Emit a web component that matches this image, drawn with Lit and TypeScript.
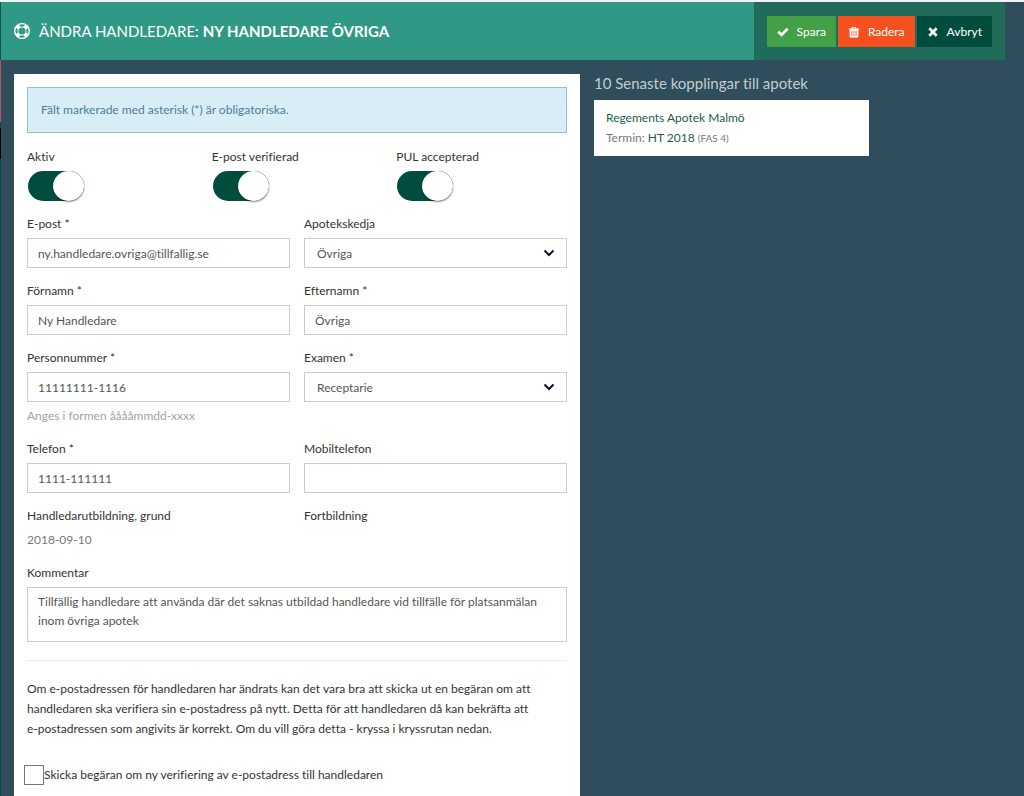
import { LitElement, html, css, svg } from "lit";
import { customElement, property } from "lit/decorators.js";

const icons = {
  ring: svg`<path fill-rule="evenodd" d="M8 0a8 8 0 1 0 0 16A8 8 0 0 0 8 0zM8 1.3a6.6 6.6 0 0 1 3.1.8L9.5 3.8a4.6 4.6 0 0 0-3 0L4.9 2.1A6.6 6.6 0 0 1 8 1.3zM2.1 4.9l1.7 1.6a4.6 4.6 0 0 0 0 3l-1.7 1.6a6.6 6.6 0 0 1 0-6.2zM8 14.7a6.6 6.6 0 0 1-3.1-.8l1.6-1.7a4.6 4.6 0 0 0 3 0l1.6 1.7a6.6 6.6 0 0 1-3.1.8zM8 11.6a3.6 3.6 0 1 1 0-7.2 3.6 3.6 0 0 1 0 7.2zM13.9 11.1l-1.7-1.6a4.6 4.6 0 0 0 0-3l1.7-1.6a6.6 6.6 0 0 1 0 6.2z"/>`,
  check: svg`<path d="M6 14.4.4 8.800 3 6.200 6 9.200 13 2.200 15.600 4.800z"/>`,
  trash: svg`<path fill-rule="evenodd" d="M5.5 1.2h5l.9 2H15v1.6h-1.2V14q0 1.4-1.4 1.4H3.6Q2.2 15.400 2.200 14V4.800H1V3.200h3.600zM6.300 3.200h3.400l-.4-.8H6.700zM4.700 6.200v7h1.100v-7zm2.800 0v7h1v-7zm2.700 0v7h1.100v-7z"/>`,
  cross: svg`<path d="M4.400 1.800 8 5.400l3.600-3.600 2.600 2.600L10.600 8l3.600 3.600-2.600 2.600L8 10.600l-3.600 3.600-2.600-2.600L5.400 8 1.800 4.400z"/>`,
};

@customElement("action-button")
class ActionButton extends LitElement {
  @property() kind = "save";
  @property() icon: keyof typeof icons = "check";

  static styles = css`
    :host { display: block; }
    .button {
      display: flex;
      align-items: center;
      gap: 8px;
      height: 31px;
      padding: 1px 10px 0;
      border: 0;
      color: #fff;
      font: 12px/20px Lato, sans-serif;
      cursor: pointer;
    }
    .save { background: #43a047; }
    .delete { background: #f4511e; }
    .cancel { background: #004d40; }
    .icon { width: 12px; height: 12px; fill: currentColor; }
  `;

  render() {
    return html`<button class="button ${this.kind}" type="button">
      <svg class="icon" viewBox="0 0 16 16" aria-hidden="true">${icons[this.icon]}</svg>
      <slot></slot>
    </button>`;
  }
}

@customElement("app-root")
class AppRoot extends LitElement {
  static styles = css`
    :host {
      display: block;
      min-height: 100vh;
      box-sizing: border-box;
      overflow: hidden;
      border-top: 2px solid #f1f3f4;
      background: #2f4d5b;
      color: #333;
      font: 12px/20px Lato, sans-serif;
      font-variant-ligatures: none;
    }
    * { box-sizing: border-box; }
    .shell {
      display: flex;
      min-height: 100vh;
    }
    .edge {
      flex: none;
      display: flex;
      flex-direction: column;
      width: 1px;
      background: #0d4a4c;
    }
    .edge-menu { height: 58px; background: #00594d; }
    .edge-alert { height: 62px; background: #a85a60; }
    .edge-gap { height: 6px; }
    .edge-item { height: 31px; background: #000; }
    .main { flex: 1; min-width: 0; }
    .header {
      display: flex;
      min-height: 58px;
      margin-right: 19px;
      background: #2f9985;
    }
    .title {
      flex: 1;
      display: flex;
      align-items: center;
      gap: 9px;
      margin: 0;
      padding-left: 13px;
      color: #fff;
      font-size: 15px;
      font-weight: 400;
      text-transform: uppercase;
    }
    .title-icon { width: 16px; height: 16px; fill: currentColor; }
    .actions {
      display: flex;
      align-items: center;
      gap: 2px;
      padding: 0 13px;
      background: #216b5b;
    }
    .content {
      display: grid;
      grid-template-columns: 566fr 411fr;
      align-items: start;
      gap: 14px;
      padding: 14px 19px 0 13px;
    }
    .form {
      display: flex;
      flex-direction: column;
      gap: 13px;
      padding: 13px 13px 40px;
      background: #fff;
    }
    .notice {
      margin: 0 0 1px;
      padding: 12px 13px;
      border: 1px solid #80cbc4;
      background: #d9edf7;
      color: #4a7d9b;
    }
    .two, .three { display: grid; gap: 14px; }
    .two { grid-template-columns: repeat(2, minmax(0, 1fr)); }
    .three { grid-template-columns: repeat(3, minmax(0, 1fr)); }
    .field { display: flex; flex-direction: column; gap: 4px; }
    .control {
      width: 100%;
      height: 30px;
      margin: 0;
      padding: 0 10px;
      border: 1px solid #ccc;
      border-radius: 0;
      background: #fff;
      color: #555;
      font: inherit;
      font-variant-ligatures: none;
    }
    .area {
      display: block;
      height: 55px;
      padding: 4px 10px;
      line-height: 19px;
      resize: none;
      overflow: hidden;
    }
    .select-box { display: grid; align-items: center; }
    .select-box > * { grid-area: 1 / 1; }
    .select { appearance: none; padding: 1px 12px 0; }
    .chevron {
      justify-self: end;
      width: 12px;
      height: 12px;
      margin-right: 12px;
      fill: none;
      stroke: #0b1030;
      stroke-width: 2;
      pointer-events: none;
    }
    .switch {
      appearance: none;
      display: flex;
      justify-content: flex-end;
      width: 56px;
      height: 30px;
      margin: 0 1px;
      border-radius: 15px;
      background: #004d40;
    }
    .switch:not(:checked) { justify-content: flex-start; background: #ccc; }
    .switch::before {
      content: "";
      width: 31px;
      height: 30px;
      border-radius: 50%;
      background: #fff;
      box-shadow: 0 1px 2px rgba(0, 0, 0, 0.5);
    }
    .hint { margin: 0; color: #a3a3a3; }
    .value { margin: 0; color: #777; }
    .rule {
      width: 100%;
      margin: 5px 0;
      border: 0;
      border-top: 1px solid #eee;
    }
    .info { margin: 0; }
    .keep { white-space: nowrap; }
    .confirm {
      display: flex;
      align-items: center;
      margin: 13px 0 0 -3px;
    }
    .tick {
      appearance: none;
      width: 20px;
      height: 20px;
      margin: 0;
      border: 1px solid #777;
      background: #fff;
    }
    .tick:checked { background: #004d40; }
    .links { display: flex; flex-direction: column; gap: 7px; }
    .links-title {
      margin: 0;
      color: #c3ccd1;
      font-size: 15px;
      font-weight: 400;
      line-height: 19px;
    }
    .card {
      width: 67%;
      padding: 8px 12px;
      background: #fff;
      color: #777;
    }
    .card-line { margin: 0; }
    .link { color: #1c5d50; text-decoration: none; }
    .small { font-size: 10px; }
  `;

  private toggle(id: string, label: string) {
    return html`<div class="field">
      <label for=${id}>${label}</label>
      <input class="switch" id=${id} type="checkbox" checked />
    </div>`;
  }

  private text(id: string, label: string, value: string, hint = "") {
    return html`<div class="field">
      <label for=${id}>${label}</label>
      <input class="control" id=${id} type="text" .value=${value} />
      ${hint ? html`<p class="hint">${hint}</p>` : ""}
    </div>`;
  }

  private choice(id: string, label: string, value: string) {
    return html`<div class="field">
      <label for=${id}>${label}</label>
      <div class="select-box">
        <select class="control select" id=${id}><option>${value}</option></select>
        <svg class="chevron" viewBox="0 0 12 12" aria-hidden="true"><path d="M1.500 3.500 6 8l4.500-4.500" /></svg>
      </div>
    </div>`;
  }

  render() {
    return html`<div class="shell">
      <div class="edge" aria-hidden="true">
        <div class="edge-menu"></div>
        <div class="edge-alert"></div>
        <div class="edge-gap"></div>
        <div class="edge-item"></div>
      </div>
      <div class="main">
        <header class="header">
          <h1 class="title">
            <svg class="title-icon" viewBox="0 0 16 16" aria-hidden="true">${icons.ring}</svg>
            <span>Ändra handledare: <b>Ny Handledare Övriga</b></span>
          </h1>
          <div class="actions">
            <action-button kind="save" icon="check">Spara</action-button>
            <action-button kind="delete" icon="trash">Radera</action-button>
            <action-button kind="cancel" icon="cross">Avbryt</action-button>
          </div>
        </header>
        <main class="content">
          <form class="form">
            <p class="notice">Fält markerade med asterisk (*) är obligatoriska.</p>
            <div class="three">
              ${this.toggle("active", "Aktiv")}
              ${this.toggle("verified", "E-post verifierad")}
              ${this.toggle("pul", "PUL accepterad")}
            </div>
            <div class="two">
              ${this.text("email", "E-post *", "ny.handledare.ovriga@tillfallig.se")}
              ${this.choice("chain", "Apotekskedja", "Övriga")}
            </div>
            <div class="two">
              ${this.text("first", "Förnamn *", "Ny Handledare")}
              ${this.text("last", "Efternamn *", "Övriga")}
            </div>
            <div class="two">
              ${this.text("pnr", "Personnummer *", "11111111-1116", "Anges i formen ååååmmdd-xxxx")}
              ${this.choice("degree", "Examen *", "Receptarie")}
            </div>
            <div class="two">
              ${this.text("phone", "Telefon *", "1111-111111")}
              ${this.text("mobile", "Mobiltelefon", "")}
            </div>
            <div class="two">
              <div class="field">
                <span>Handledarutbildning, grund</span>
                <p class="value">2018-09-10</p>
              </div>
              <div class="field"><span>Fortbildning</span></div>
            </div>
            <div class="field">
              <label for="comment">Kommentar</label>
              <textarea class="control area" id="comment" .value=${"Tillfällig handledare att använda där det saknas utbildad handledare vid tillfälle för platsanmälan inom övriga apotek"}></textarea>
            </div>
            <hr class="rule" />
            <p class="info">
              Om e-postadressen för handledaren har ändrats kan det vara bra att skicka ut en begäran om att
              handledaren ska verifiera sin e-postadress på nytt. Detta för att handledaren då kan bekräfta att
              <span class="keep">e-postadressen</span> som angivits är korrekt. Om du vill göra detta - kryssa i kryssrutan nedan.
            </p>
            <div class="confirm">
              <input class="tick" id="resend" type="checkbox" />
              <label for="resend">Skicka begäran om ny verifiering av e-postadress till handledaren</label>
            </div>
          </form>
          <section class="links">
            <h2 class="links-title">10 Senaste kopplingar till apotek</h2>
            <div class="card">
              <p class="card-line"><a class="link" href="#">Regements Apotek Malmö</a></p>
              <p class="card-line">Termin: <a class="link" href="#">HT 2018</a> <span class="small">(FAS 4)</span></p>
            </div>
          </section>
        </main>
      </div>
    </div>`;
  }
}
